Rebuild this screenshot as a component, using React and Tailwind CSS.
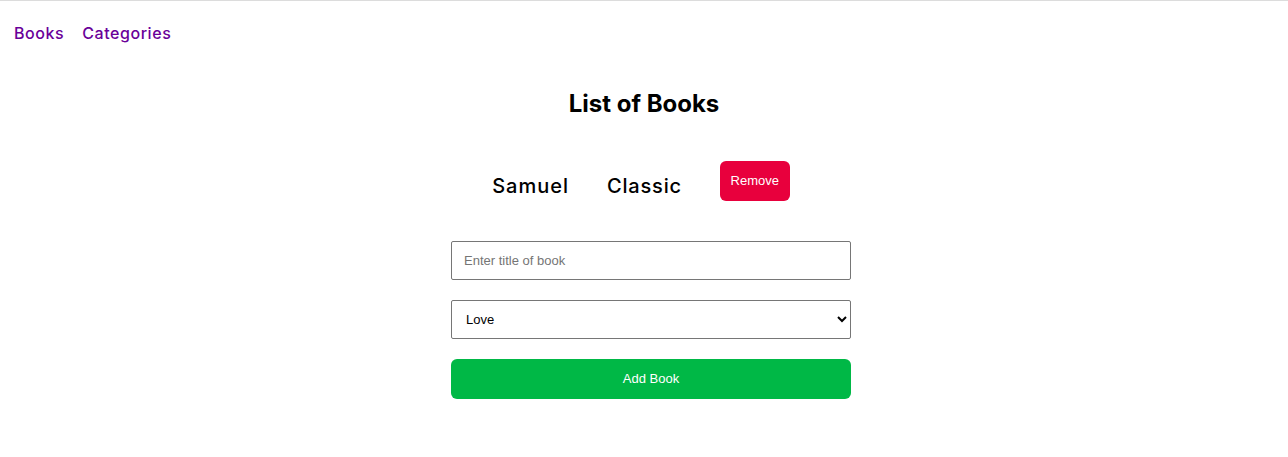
import React from 'react';

const font = { fontFamily: 'Inter, "Open Sans", sans-serif' };

const Nav = () => (
  <nav className="flex gap-[18px] px-[14px] pt-[20px] text-base font-medium tracking-[0.035em] text-[#6a0099]">
    <a href="#">Books</a>
    <a href="#">Categories</a>
  </nav>
);

const BookRow = ({ title, category }) => (
  <div className="flex items-center justify-center gap-[38px] pr-[6px]">
    <span className="text-xl font-medium tracking-[0.05em] text-black">{title}</span>
    <span className="text-xl font-medium tracking-[0.04em] text-black">{category}</span>
    <button className="h-10 w-[70px] -translate-y-[5px] rounded-md bg-[#e8003d] text-[13px] text-white [font-family:'Liberation_Sans',Arial,sans-serif]">
      Remove
    </button>
  </div>
);

const AddForm = () => (
  <form className="mx-auto flex w-[400px] flex-col gap-5 [font-family:'Liberation_Sans',Arial,sans-serif]">
    <input
      type="text"
      placeholder="Enter title of book"
      className="h-[39px] rounded-[2px] border border-[#767676] px-3 text-[13px] placeholder:text-[#757575]"
    />
    <select className="h-[39px] rounded-[2px] border border-[#767676] bg-white px-[10px] text-[13px] text-black" defaultValue="Love">
      <option>Love</option>
      <option>Action</option>
      <option>Fiction</option>
    </select>
    <button type="button" className="h-10 rounded-md bg-[#00b846] text-[13px] text-white">
      Add Book
    </button>
  </form>
);

export default function App() {
  return (
    <div className="min-h-[457px] border-t border-[#dcdcdc] bg-white" style={font}>
      <Nav />
      <main className="flex flex-col items-center">
        <h1 className="mt-[43px] text-2xl font-bold text-black">List of Books</h1>
        <div className="mt-[46px] w-full">
          <BookRow title="Samuel" category="Classic" />
        </div>
        <div className="mt-[35px] w-full pl-[14px]">
          <AddForm />
        </div>
      </main>
    </div>
  );
}
